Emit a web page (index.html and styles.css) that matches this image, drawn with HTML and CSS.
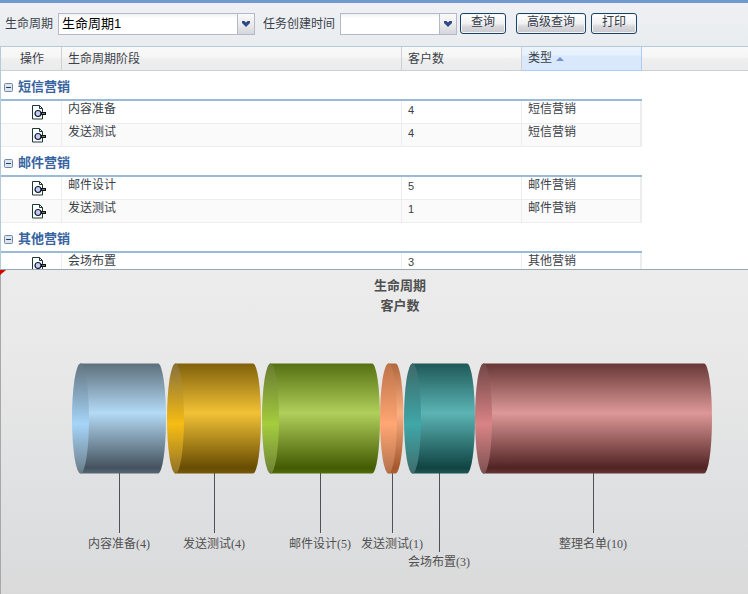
FILE: index.html
```html
<!DOCTYPE html>
<html lang="zh-CN">
<head>
    <meta charset="UTF-8">
    <meta name="viewport" content="width=device-width, initial-scale=1.0">
    <title>生命周期</title>
    <link rel="stylesheet" href="styles.css">
</head>
<body>
    <svg width="0" height="0" class="symbols" aria-hidden="true">
        <symbol id="view" viewBox="0 0 15 15">
            <path d="M1.500 .5h7l3 3v10.500h-10z" fill="#fff" stroke="#1c3a34"/>
            <path d="M8.500 .5v3h3" fill="none" stroke="#1c3a34"/>
            <path d="M10 8.500h5" stroke="#111" stroke-width="3"/>
            <path d="M11 8.500h3" stroke="#6b7a70"/>
            <circle cx="7" cy="8.500" r="3" fill="#c3cdf8" stroke="#15152c" stroke-width="1.200"/>
        </symbol>
        <symbol id="minus" viewBox="0 0 9 9">
            <rect x=".5" y=".5" width="8" height="8" rx="1" fill="#dfe5ee" stroke="#7189a8"/>
            <path d="M2 4.500h5" stroke="#1f3f68"/>
        </symbol>
        <symbol id="arrow" viewBox="0 0 16 20">
            <path d="M4 7h2.500L8 8.500 9.500 7H12v2L8 13 4 9z" fill="#2c4a86"/>
        </symbol>
    </svg>

    <form class="toolbar">
        <label for="cycle">生命周期</label>
        <span class="combo combo-wide">
            <select id="cycle"><option>生命周期1</option></select>
            <svg class="trigger"><use href="#arrow"/></svg>
        </span>
        <label for="created" class="label-created">任务创建时间</label>
        <span class="combo">
            <select id="created"><option></option></select>
            <svg class="trigger"><use href="#arrow"/></svg>
        </span>
        <button type="button">查询</button>
        <button type="button" class="btn-advanced">高级查询</button>
        <button type="button">打印</button>
    </form>

    <div class="grid">
        <table>
            <colgroup>
                <col class="col-action"><col class="col-stage"><col class="col-count"><col class="col-type"><col>
            </colgroup>
            <thead>
                <tr>
                    <th class="center">操作</th>
                    <th>生命周期阶段</th>
                    <th>客户数</th>
                    <th class="sorted">类型<svg class="sort" viewBox="0 0 8 4"><path d="M0 4l4-4 4 4z" fill="#6e93cf"/></svg></th>
                    <th class="rest"></th>
                </tr>
            </thead>
            <tbody>
                <tr class="group"><th colspan="4"><svg class="toggle"><use href="#minus"/></svg>短信营销</th><td class="rest"></td></tr>
                <tr><td class="center"><svg class="icon"><use href="#view"/></svg></td><td>内容准备</td><td class="num">4</td><td class="last">短信营销</td><td class="rest"></td></tr>
                <tr class="alt"><td class="center"><svg class="icon"><use href="#view"/></svg></td><td>发送测试</td><td class="num">4</td><td class="last">短信营销</td><td class="rest"></td></tr>
            </tbody>
            <tbody>
                <tr class="group"><th colspan="4"><svg class="toggle"><use href="#minus"/></svg>邮件营销</th><td class="rest"></td></tr>
                <tr><td class="center"><svg class="icon"><use href="#view"/></svg></td><td>邮件设计</td><td class="num">5</td><td class="last">邮件营销</td><td class="rest"></td></tr>
                <tr class="alt"><td class="center"><svg class="icon"><use href="#view"/></svg></td><td>发送测试</td><td class="num">1</td><td class="last">邮件营销</td><td class="rest"></td></tr>
            </tbody>
            <tbody>
                <tr class="group"><th colspan="4"><svg class="toggle"><use href="#minus"/></svg>其他营销</th><td class="rest"></td></tr>
                <tr><td class="center"><svg class="icon"><use href="#view"/></svg></td><td>会场布置</td><td class="num">3</td><td class="last">其他营销</td><td class="rest"></td></tr>
            </tbody>
        </table>
    </div>

    <svg class="chart" viewBox="0 0 748 324">
        <defs>
            <linearGradient id="back" x2="0" y2="1"><stop offset="0" stop-color="#ececec"/><stop offset=".25" stop-color="#e9e9e9"/><stop offset=".85" stop-color="#dcdddf"/><stop offset="1" stop-color="#dadada"/></linearGradient>

            <linearGradient id="b1" x2="0" y2="1"><stop offset="0" stop-color="#5d6f7c"/><stop offset=".45" stop-color="#b4daf5"/><stop offset=".95" stop-color="#44525d"/><stop offset="1" stop-color="#566977"/></linearGradient>
            <linearGradient id="f1" x2="0" y2="1"><stop offset="0" stop-color="#627480"/><stop offset=".55" stop-color="#a6d5f9"/><stop offset="1" stop-color="#6b7c88"/></linearGradient>

            <linearGradient id="b2" x2="0" y2="1"><stop offset="0" stop-color="#80600b"/><stop offset=".45" stop-color="#f2c235"/><stop offset=".95" stop-color="#684c02"/><stop offset="1" stop-color="#785a0a"/></linearGradient>
            <linearGradient id="f2" x2="0" y2="1"><stop offset="0" stop-color="#87703a"/><stop offset=".55" stop-color="#f7bd13"/><stop offset="1" stop-color="#917229"/></linearGradient>

            <linearGradient id="b3" x2="0" y2="1"><stop offset="0" stop-color="#557012"/><stop offset=".45" stop-color="#b0cf5b"/><stop offset=".95" stop-color="#435b02"/><stop offset="1" stop-color="#536e0a"/></linearGradient>
            <linearGradient id="f3" x2="0" y2="1"><stop offset="0" stop-color="#687b32"/><stop offset=".55" stop-color="#a4cd3d"/><stop offset="1" stop-color="#6e8236"/></linearGradient>

            <linearGradient id="b4" x2="0" y2="1"><stop offset="0" stop-color="#b0683c"/><stop offset=".45" stop-color="#fbb083"/><stop offset=".95" stop-color="#a4572a"/><stop offset="1" stop-color="#ad6033"/></linearGradient>
            <linearGradient id="f4" x2="0" y2="1"><stop offset="0" stop-color="#bd7349"/><stop offset=".55" stop-color="#ffa674"/><stop offset="1" stop-color="#b4714b"/></linearGradient>

            <linearGradient id="b5" x2="0" y2="1"><stop offset="0" stop-color="#1f5958"/><stop offset=".45" stop-color="#5cb4b5"/><stop offset=".95" stop-color="#104443"/><stop offset="1" stop-color="#1e5655"/></linearGradient>
            <linearGradient id="f5" x2="0" y2="1"><stop offset="0" stop-color="#3c6969"/><stop offset=".55" stop-color="#40a7a8"/><stop offset="1" stop-color="#3f6d6d"/></linearGradient>

            <linearGradient id="b6" x2="0" y2="1"><stop offset="0" stop-color="#683636"/><stop offset=".45" stop-color="#dd9898"/><stop offset=".95" stop-color="#522323"/><stop offset="1" stop-color="#663636"/></linearGradient>
            <linearGradient id="f6" x2="0" y2="1"><stop offset="0" stop-color="#714747"/><stop offset=".55" stop-color="#da8385"/><stop offset="1" stop-color="#7d5252"/></linearGradient>
        </defs>

        <rect width="748" height="324" fill="url(#back)"/>
        <path d="M.5 0v324" stroke="#a8a8aa"/>
        <path d="M0 0h6L0 5z" fill="#d40000"/>

        <g class="chart-title">
            <text x="400" y="20">生命周期</text>
            <text x="400" y="40">客户数</text>
        </g>

        <g class="leader">
            <path d="M119.500 203v60"/>
            <path d="M214.500 203v60"/>
            <path d="M320.500 203v60"/>
            <path d="M392.500 203v60"/>
            <path d="M439.500 203v79"/>
            <path d="M593.500 203v60"/>
        </g>

        <!-- each segment: body, then the left face -->
        <path d="M80 93.500H158A8 55 0 0 1 158 203.500H80z" fill="url(#b1)"/>
        <ellipse cx="80.500" cy="148.500" rx="8.500" ry="55" fill="url(#f1)"/>
        <path d="M175 93.500H253A8 55 0 0 1 253 203.500H175z" fill="url(#b2)"/>
        <ellipse cx="175.500" cy="148.500" rx="8.500" ry="55" fill="url(#f2)"/>
        <path d="M270 93.500H372A8 55 0 0 1 372 203.500H270z" fill="url(#b3)"/>
        <ellipse cx="270.500" cy="148.500" rx="8.500" ry="55" fill="url(#f3)"/>
        <path d="M388 93.500H395.500A8 55 0 0 1 395.500 203.500H388z" fill="url(#b4)"/>
        <ellipse cx="388.500" cy="148.500" rx="8.500" ry="55" fill="url(#f4)"/>
        <path d="M412 93.500H467A8 55 0 0 1 467 203.500H412z" fill="url(#b5)"/>
        <ellipse cx="412.500" cy="148.500" rx="8.500" ry="55" fill="url(#f5)"/>
        <path d="M483 93.500H704A8 55 0 0 1 704 203.500H483z" fill="url(#b6)"/>
        <ellipse cx="483.500" cy="148.500" rx="8.500" ry="55" fill="url(#f6)"/>

        <g class="chart-label">
            <text x="119" y="278">内容准备(4)</text>
            <text x="214" y="278">发送测试(4)</text>
            <text x="320" y="278">邮件设计(5)</text>
            <text x="392" y="278">发送测试(1)</text>
            <text x="439" y="296">会场布置(3)</text>
            <text x="593" y="278">整理名单(10)</text>
        </g>
    </svg>
</body>
</html>
```

FILE: styles.css
```css
* {
    box-sizing: border-box;
}

body {
    margin: 0;
    height: 100vh;
    display: flex;
    flex-direction: column;
    overflow: hidden;
    background: #fff;
    color: #3b3f49;
    font: 12px/16px "Liberation Sans", "Noto Sans CJK SC", sans-serif;
}

.symbols {
    position: absolute;
}

/* toolbar */
.toolbar {
    display: flex;
    align-items: flex-start;
    padding: 10px 5px 11px;
    border-top: 3px solid #6f99d0;
    background: linear-gradient(#eef0f4, #e9edf0);
}

.toolbar label {
    margin: 3px 5px 0 0;
}

.toolbar .label-created {
    margin-left: 8px;
}

.combo {
    display: flex;
    width: 117px;
    height: 22px;
    border: 1px solid #b5b8c8;
    background: linear-gradient(#f1f1f1, #fff 4px);
}

.combo-wide {
    width: 197px;
}

.combo select {
    flex: 1;
    min-width: 0;
    margin-right: -17px;
    padding: 0 20px 0 3px;
    border: 0;
    appearance: none;
    background: transparent;
    color: #000;
    font: 13px/20px "Liberation Sans", "Noto Sans CJK SC", sans-serif;
}

.trigger {
    width: 17px;
    height: 20px;
    border-left: 1px solid #b5b8c8;
    background: linear-gradient(#fafafa, #ececed 50%, #d5d6da);
    pointer-events: none;
}

button {
    height: 21px;
    margin-left: 5px;
    padding: 0 10px 4px;
    border: 1px solid #1c4266;
    border-radius: 3px;
    background: linear-gradient(#fff, #f1f1f3 50%, #d9d9dd 65%, #c8c8cd);
    box-shadow: inset 0 0 0 1px #f4f7fa;
    color: #333a48;
    font: 12px/16px "Liberation Sans", "Noto Sans CJK SC", sans-serif;
}

.combo + button {
    margin-left: 3px;
}

.toolbar .btn-advanced {
    margin-left: 10px;
}

/* grid */
.grid {
    flex: 1;
    min-height: 0;
    overflow: hidden;
    border: 1px solid #b4cadb;
    border-right: 0;
    border-bottom-color: #98a9b5;
}

table {
    width: 100%;
    table-layout: fixed;
    border-collapse: separate;
    border-spacing: 0;
}

.col-action {
    width: 61px;
}

.col-stage {
    width: 340px;
}

.col-count,
.col-type {
    width: 120px;
}

th,
td {
    padding: 0 6px;
    text-align: left;
    vertical-align: top;
    font-weight: normal;
}

thead th {
    height: 24px;
    padding-top: 4px;
    border-right: 1px solid #d0d0d0;
    border-bottom: 1px solid #d0d0d0;
    background: linear-gradient(#f9f9f9, #f6f6f6 45%, #efefef 50%, #eaebec);
}

thead .center {
    padding-left: 8px;
}

thead .sorted {
    padding-top: 3px;
    border: 1px solid #aaccf6;
    border-top: 0;
    border-left: 0;
    background: linear-gradient(#ebf3fd, #e6f1fd 35%, #d9e8fb 40%);
}

thead .rest {
    border-right: 0;
}

.sort {
    width: 8px;
    height: 4px;
    margin-left: 4px;
    vertical-align: 1px;
}

tbody td {
    height: 23px;
    border-right: 1px solid #ededed;
    border-bottom: 1px solid #ededed;
}

tbody .last {
    border-right-width: 2px;
}

.alt td {
    background: #fafafa;
}

tbody td.rest {
    border: 0;
    background: none;
}

tbody .num {
    padding-top: 1px;
    font-size: 11px;
}

.center {
    text-align: center;
}

tbody .center {
    padding: 4px 0 0 14px;
}

.icon {
    display: block;
    width: 15px;
    height: 15px;
    margin: 0 auto;
}

.group th {
    height: 30px;
    padding: 8px 3px 0;
    border-bottom: 2px solid #99bbd8;
    color: #3764a0;
    font-weight: bold;
    font-size: 13px;
}

.toggle {
    width: 9px;
    height: 9px;
    margin-right: 5px;
    vertical-align: -1px;
}

/* chart */
.chart {
    display: block;
    flex: none;
    width: 100%;
    height: auto;
}

.chart text {
    text-anchor: middle;
    fill: #505050;
}

.chart-title {
    font: bold 13px "Liberation Sans", "Noto Sans CJK SC", sans-serif;
}

.chart-label {
    font: 12px "Liberation Serif", "Noto Sans CJK SC", serif;
}

.leader {
    stroke: #4f5254;
}
```
